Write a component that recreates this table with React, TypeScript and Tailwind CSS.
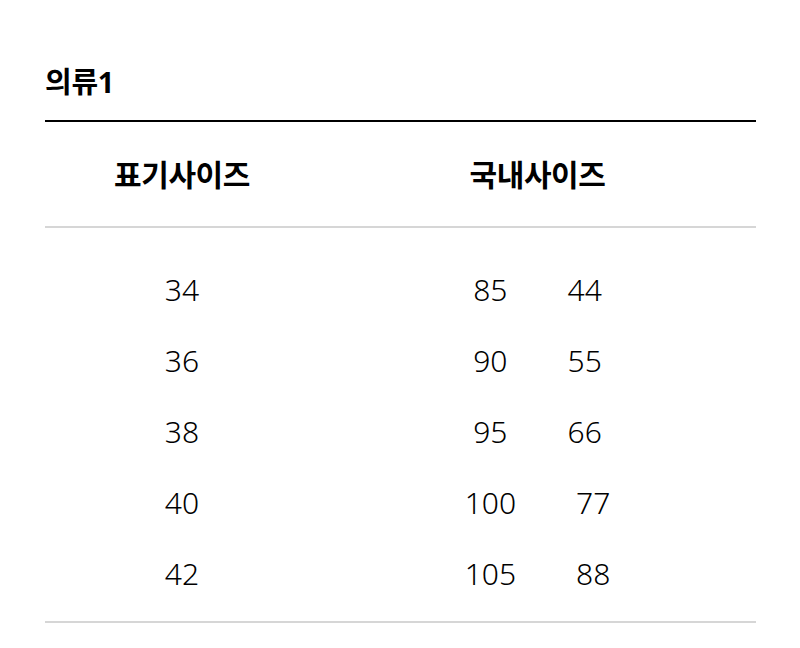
const rows = [
  { label: "34", kr: "85", size: "44" },
  { label: "36", kr: "90", size: "55" },
  { label: "38", kr: "95", size: "66" },
  { label: "40", kr: "100", size: "77" },
  { label: "42", kr: "105", size: "88" },
];

const font = {
  fontFamily: '"Noto Sans", "Noto Sans CJK KR", sans-serif',
};

export default function App() {
  return (
    <div
      className="min-h-[648px] w-[800px] bg-white pl-[45px] pr-[44px] pt-[64px] text-black"
      style={font}
    >
      <h1 className="h-[36px] text-[29px] font-bold leading-[36px] tracking-[-0.3px]">
        의류1
      </h1>

      <div className="mt-[20px] border-t-2 border-black">
        <div className="grid h-[104px] grid-cols-[274px_1fr] items-center text-[30px] font-bold tracking-[-0.4px]">
          <div className="text-center">표기사이즈</div>
          <div className="text-center">국내사이즈</div>
        </div>

        <div className="border-t-2 border-[#d6d6d6] pb-[12px] pt-[26px]">
          {rows.map((row) => (
            <div
              key={row.label}
              className="grid h-[71px] grid-cols-[274px_1fr] items-center text-[30px] font-light"
            >
              <div className="text-center">{row.label}</div>
              <div className="flex justify-center gap-[60px]">
                <span>{row.kr}</span>
                <span>{row.size}</span>
              </div>
            </div>
          ))}
        </div>

        <div className="border-t-2 border-[#d6d6d6]" />
      </div>
    </div>
  );
}
